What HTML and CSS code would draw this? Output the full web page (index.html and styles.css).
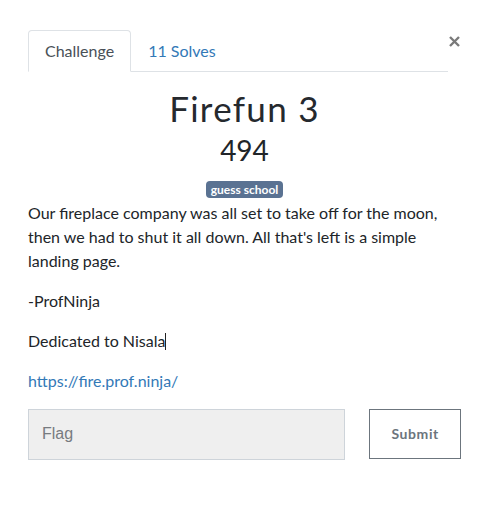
FILE: index.html
```html
<!DOCTYPE html>
<html>
<head>
<meta charset="utf-8">
<link rel="stylesheet" href="styles.css">
</head>
<body>
<div class="modal">
  <div class="tabs-row">
    <ul class="tabs">
      <li class="tab active">Challenge</li>
      <li class="tab"><a href="#">11 Solves</a></li>
    </ul>
    <button class="close" aria-label="Close">
      <svg width="11" height="11" viewBox="0 0 11 11"><path d="M1 1L10 10M10 1L1 10" stroke="#7a7a7a" stroke-width="2.4" stroke-linecap="butt"/></svg>
    </button>
  </div>
  <h2 class="name">Firefun 3</h2>
  <h3 class="value">494</h3>
  <div class="tags"><span class="badge">guess school</span></div>
  <div class="desc">
    <p>Our fireplace company was all set to take off for the moon, then we had to shut it all down. All that's left is a simple landing page.</p>
    <p>-ProfNinja</p>
    <p>Dedicated to Nisala<span class="caret"></span></p>
    <p><a href="#">https://fire.prof.ninja/</a></p>
  </div>
  <form class="flag-form">
    <input class="flag" type="text" placeholder="Flag">
    <button class="submit" type="button">Submit</button>
  </form>
</div>
</body>
</html>
```
FILE: styles.css
```css
html, body {
  margin: 0;
  padding: 0;
  background: #fff;
}
body {
  font-family: Lato, "Open Sans", sans-serif;
  color: #212529;
  font-size: 16px;
  line-height: 1.5;
}
.modal {
  padding: 30px 0 0 28px;
  width: 433px;
}
.tabs-row {
  display: flex;
  align-items: flex-start;
}
.tabs {
  list-style: none;
  margin: 0;
  padding: 0;
  display: flex;
  width: 420px;
  border-bottom: 1px solid #dee2e6;
}
.tab {
  padding: 8px 16px;
  border: 1px solid transparent;
  border-radius: 4px 4px 0 0;
  margin-bottom: -1px;
  color: #495057;
}
.tab.active {
  border-color: #dee2e6 #dee2e6 #fff;
  background: #fff;
}
.tab a {
  color: #3379b7;
  text-decoration: none;
}
.close {
  margin: 6px 0 0 1px;
  padding: 0;
  border: 0;
  background: none;
  width: 11px;
  height: 11px;
  display: flex;
}
.name {
  margin: 15px 0 0;
  width: 433px;
  text-align: center;
  font-weight: 400;
  font-size: 35px;
  line-height: 1.2;
  letter-spacing: 1.3px;
  color: #25292e;
}
.value {
  margin: 5px 0 0;
  width: 433px;
  text-align: center;
  font-weight: 400;
  font-size: 28px;
  line-height: 1.2;
}
.tags {
  margin-top: 13px;
  width: 433px;
  display: flex;
  justify-content: center;
}
.badge {
  background: #5a7292;
  color: #fff;
  font-weight: 700;
  font-size: 12px;
  line-height: 13px;
  padding: 2px 5px;
  border-radius: 4px;
}
.desc {
  margin-top: 3px;
  width: 420px;
}
.desc p {
  margin: 0 0 16px;
}
.desc a {
  color: #3379b7;
  text-decoration: none;
}
.caret {
  display: inline-block;
  width: 0;
  height: 17px;
  border-left: 1px solid #222;
  vertical-align: -3px;
}
.flag-form {
  display: flex;
  gap: 24px;
  align-items: flex-start;
}
.flag {
  width: 318px;
  height: 51px;
  box-sizing: border-box;
  background: #efefef;
  border: 1px solid #ced4da;
  padding: 0 13px;
  font-family: "Liberation Sans", Arial, sans-serif;
  font-size: 16px;
  color: #495057;
  outline: none;
}
.flag::placeholder {
  color: #777b80;
}
.submit {
  width: 92px;
  height: 50px;
  box-sizing: border-box;
  background: #fff;
  border: 1px solid #6c757d;
  color: #6c757d;
  font-family: Lato, sans-serif;
  font-weight: 700;
  font-size: 14px;
  letter-spacing: 0.6px;
  padding: 0;
}
```
